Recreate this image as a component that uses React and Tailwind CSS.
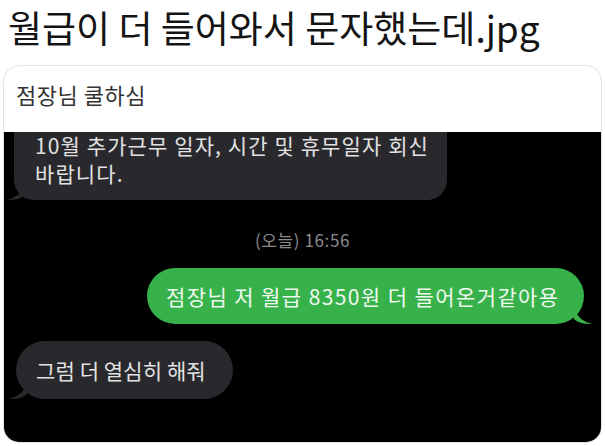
import React from 'react';

const Tail = ({ side, color }) => {
  // small curled tail at the bottom corner of a bubble
  if (side === 'left') {
    return (
      <svg className="absolute -left-[7px] bottom-0 w-[18px] h-[18px]" viewBox="0 0 18 18">
        <path d="M18 0 C16 8 13 14 0 18 C8 18 14 17 18 13 Z" fill={color} />
      </svg>
    );
  }
  return (
    <svg className="absolute -right-[8px] bottom-0 w-[18px] h-[18px]" viewBox="0 0 18 18">
      <path d="M0 0 C2 8 5 14 18 18 C10 18 4 17 0 13 Z" fill={color} />
    </svg>
  );
};

const App = () => {
  return (
    <div
      className="w-[605px] h-[446px] bg-white overflow-hidden"
      style={{ fontFamily: '"Noto Sans CJK KR", "Noto Sans", sans-serif' }}
    >
      <h1 className="pl-2 text-[37px] leading-[54px] font-normal text-[#141414] whitespace-nowrap">
        월급이 더 들어와서 문자했는데.jpg
      </h1>

      <div className="mx-[3px] mt-[11px] h-[378px] rounded-2xl border border-[#e4e4e4] overflow-hidden flex flex-col">
        {/* caption header */}
        <div className="h-[66px] shrink-0 px-[12px] pt-[14px] text-[22px] leading-[28px] tracking-[0.5px] text-[#333]">
          점장님 쿨하심
        </div>

        {/* screenshot of the chat */}
        <div className="flex-1 bg-black px-[10px] flex flex-col">
          {/* received, cut off at the top */}
          <div className="relative w-[433px] h-[68px] bg-[#29292d] rounded-b-[20px]">
            <Tail side="left" color="#29292d" />
            <p className="relative pl-[21px] -mt-[1px] text-[21px] leading-[28px] tracking-[1.1px] text-[#e2e2e2] whitespace-nowrap">
              10월 추가근무 일자, 시간 및 휴무일자 회신
              <br />
              바랍니다.
            </p>
          </div>

          <div className="mt-[30px] text-center text-[17px] leading-[20px] tracking-[0.6px] text-[#8b8b8f]">
            (오늘) 16:56
          </div>

          <div className="mt-[18px] flex justify-end pr-[7px]">
            <div className="relative w-[437px] h-[56px] bg-[#37b24b] rounded-[28px] flex items-center">
              <Tail side="right" color="#37b24b" />
              <span className="relative pl-[19px] text-[21px] leading-[28px] tracking-[1.4px] text-[#eef8ee] whitespace-nowrap">
                점장님 저 월급 8350원 더 들어온거같아용
              </span>
            </div>
          </div>

          <div className="mt-[17px] flex">
            <div className="relative ml-[2px] w-[217px] h-[58px] bg-[#29292d] rounded-[29px] flex items-center">
              <Tail side="left" color="#29292d" />
              <span className="relative pl-[20px] text-[21px] leading-[28px] tracking-[0.1px] text-[#e2e2e2] whitespace-nowrap">
                그럼 더 열심히 해줘
              </span>
            </div>
          </div>
        </div>
      </div>
    </div>
  );
};

export default App;
